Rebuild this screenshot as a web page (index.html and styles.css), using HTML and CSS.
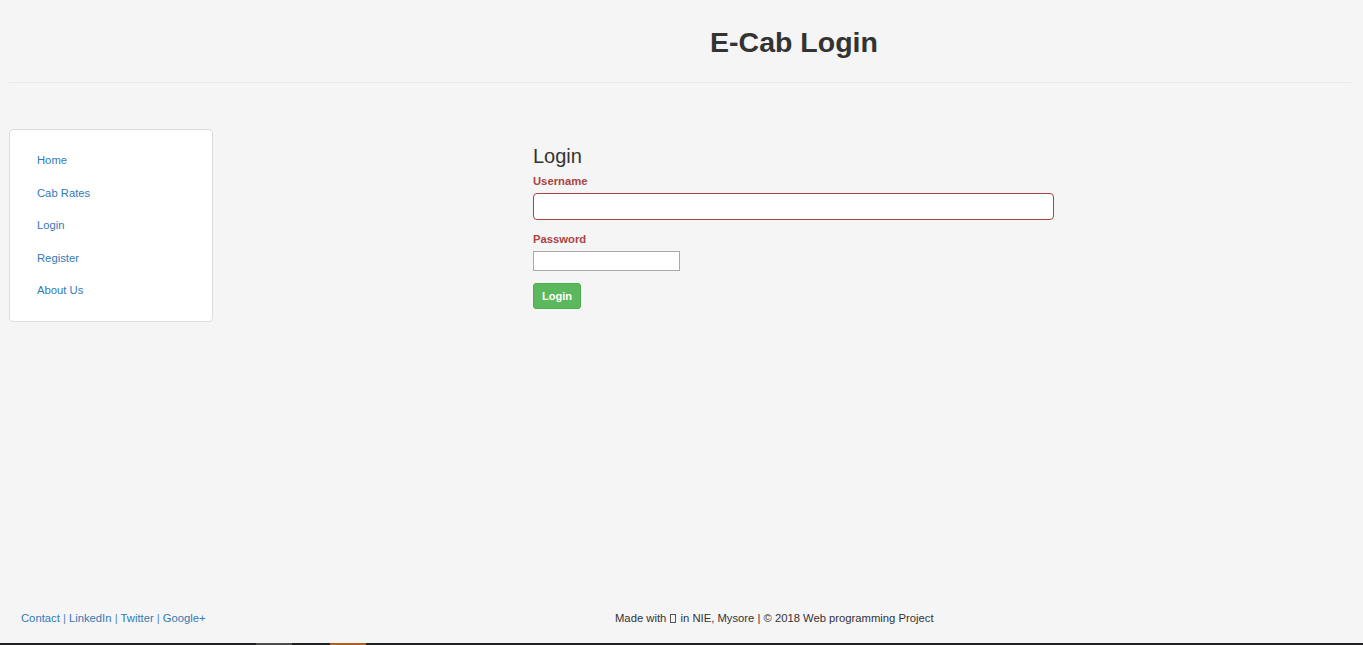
FILE: index.html
```html
<!DOCTYPE html>
<html>
<head>
<meta charset="utf-8">
<title>E-Cab Login</title>
<link rel="stylesheet" href="styles.css">
</head>
<body>
<div class="page">
  <header class="header">
    <h1 class="title">E-Cab Login</h1>
  </header>
  <div class="rule"></div>
  <main class="main">
    <nav class="sidebar">
      <ul class="nav">
        <li><a href="#">Home</a></li>
        <li><a href="#">Cab Rates</a></li>
        <li><a href="#">Login</a></li>
        <li><a href="#">Register</a></li>
        <li><a href="#">About Us</a></li>
      </ul>
    </nav>
    <form class="form">
      <h3 class="form-title">Login</h3>
      <label class="label">Username</label>
      <input class="input-user" type="text">
      <label class="label label-pass">Password</label>
      <input class="input-pass" type="password">
      <button class="btn" type="button">Login</button>
    </form>
  </main>
  <footer class="footer">
    <div class="links"><a href="#">Contact</a> | <a href="#">LinkedIn</a> | <a href="#">Twitter</a> | <a href="#">Google+</a></div>
    <div class="made">Made with <span class="tofu"></span> in NIE, Mysore | © 2018 Web programming Project</div>
  </footer>
  <div class="strip"><span class="seg seg-gray"></span><span class="seg seg-orange"></span></div>
</div>
</body>
</html>
```
FILE: styles.css
```css
* { box-sizing: border-box; }
html, body { margin: 0; padding: 0; }
body {
  background: #f5f5f5;
  font-family: "Liberation Sans", Arial, sans-serif;
  color: #333;
  font-size: 11.25px;
}
.page {
  height: 645px;
  display: flex;
  flex-direction: column;
  overflow: hidden;
}
.header {
  padding-top: 27px;
  padding-left: 225px;
  text-align: center;
}
.title {
  margin: 0;
  font-size: 28.5px;
  line-height: 31px;
  font-weight: bold;
  color: #333;
}
.rule {
  margin: 24px 12px 0 9px;
  border-top: 1px solid #e9e9e9;
}
.main {
  flex: 1;
  display: flex;
  align-items: flex-start;
  padding-top: 46px;
  padding-left: 9px;
}
.sidebar {
  width: 204px;
  background: #fff;
  border: 1px solid #ddd;
  border-radius: 4px;
  padding: 14px 27px 14px 27px;
}
.nav {
  list-style: none;
  margin: 0;
  padding: 0;
}
.nav li {
  height: 32.5px;
  line-height: 32.5px;
}
a {
  color: #337ab7;
  text-decoration: none;
}
.form {
  margin-left: 320px;
  padding-top: 16px;
  display: flex;
  flex-direction: column;
  align-items: flex-start;
}
.form-title {
  margin: 0;
  font-size: 20px;
  line-height: 22px;
  font-weight: normal;
  color: #333;
}
.label {
  margin-top: 7px;
  font-size: 11.25px;
  line-height: 14px;
  font-weight: bold;
  color: #a94442;
}
.label-pass { margin-top: 12px; }
.input-user {
  margin-top: 5px;
  width: 521px;
  height: 27px;
  border: 1px solid #a94442;
  border-radius: 4px;
  background: #fff;
}
.input-pass {
  margin-top: 5px;
  width: 147px;
  height: 20px;
  border: 1px solid #a9a9a9;
  background: #fff;
}
.btn {
  margin-top: 12px;
  width: 48px;
  height: 26px;
  background: #5cb85c;
  border: 1px solid #4cae4c;
  border-radius: 3px;
  color: #fff;
  font-family: "Liberation Sans", Arial, sans-serif;
  font-size: 11px;
  font-weight: bold;
  padding: 0;
}
.footer {
  display: grid;
  grid-template-columns: 594px auto;
  padding: 0 0 18px 21px;
  line-height: 14px;
  font-size: 11.25px;
}
.links { color: #5a86b3; }
.made { color: #333; }
.tofu {
  display: inline-block;
  width: 6px;
  height: 9px;
  border: 1px solid #555;
  vertical-align: -1px;
  margin: 0 1px;
}
.strip {
  height: 2px;
  background: #1f2223;
  position: relative;
  flex: none;
}
.seg {
  position: absolute;
  top: 0;
  height: 2px;
  width: 36px;
}
.seg-gray { left: 256px; background: #4d4d4d; }
.seg-orange { left: 330px; background: #a8612a; }
```
